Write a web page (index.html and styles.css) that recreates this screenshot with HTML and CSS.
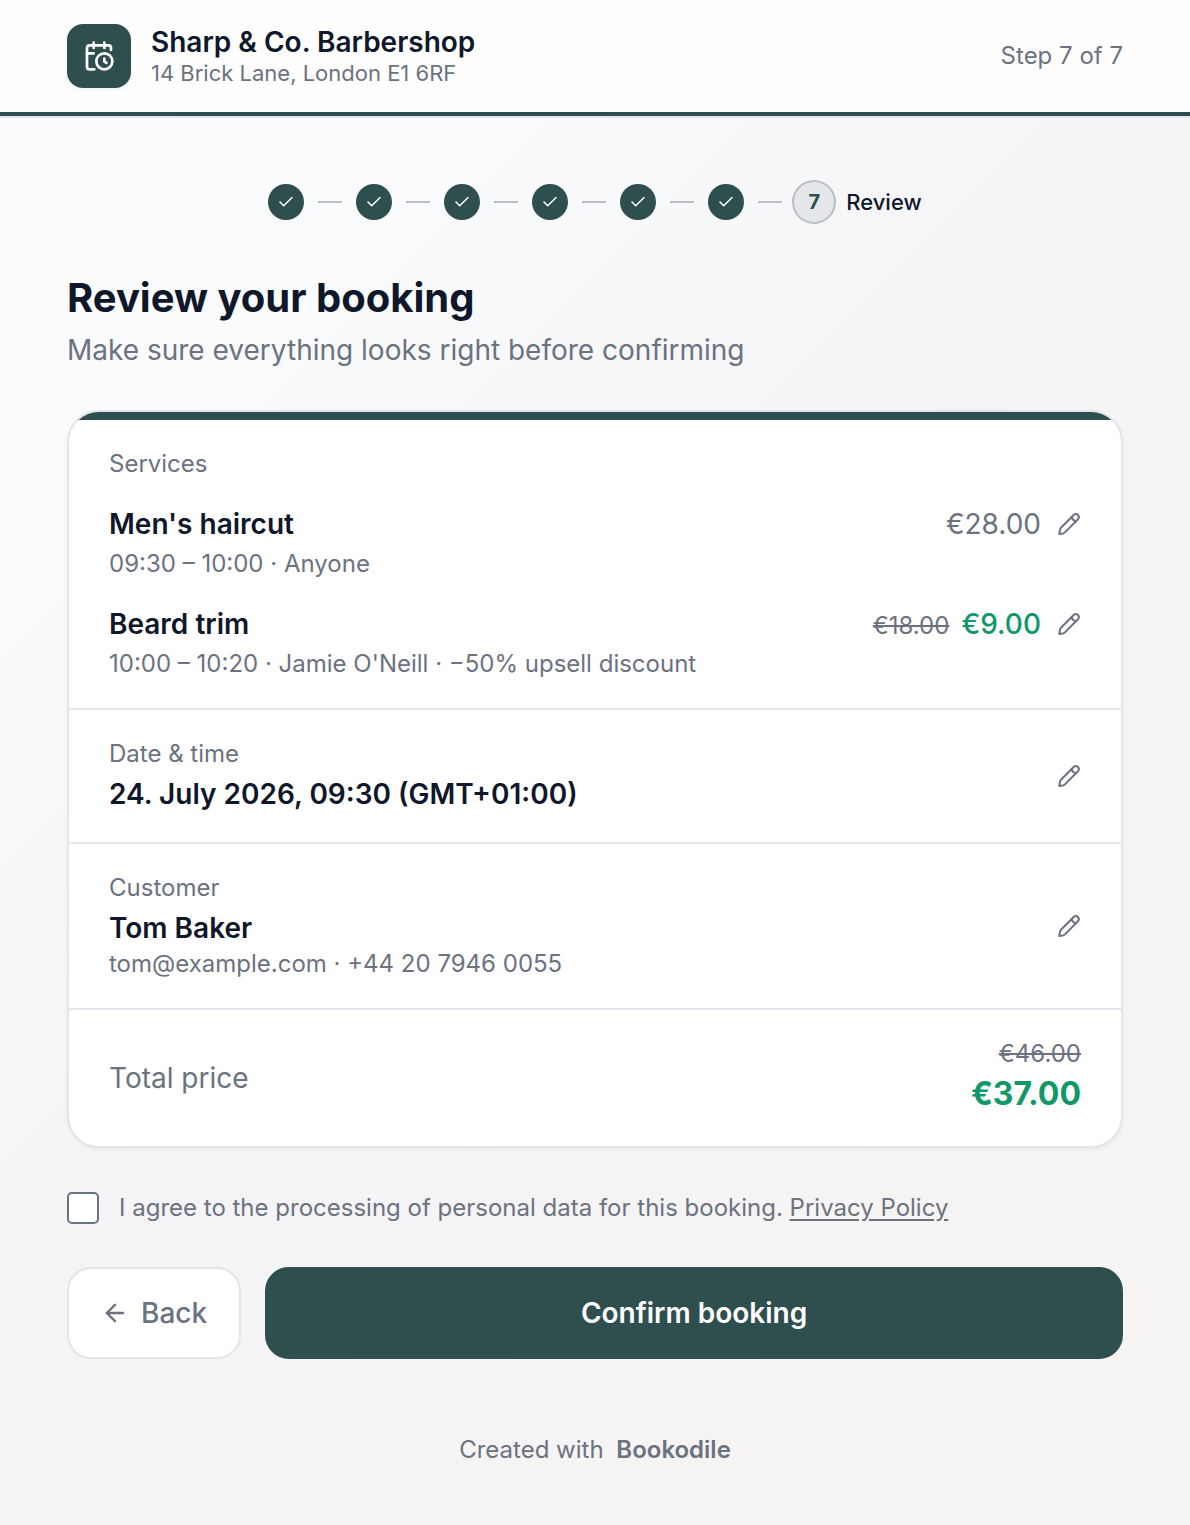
FILE: index.html
```html
<!DOCTYPE html>
<html lang="en">
<head>
  <meta charset="UTF-8" />
  <meta name="viewport" content="width=device-width, initial-scale=1.0"/>
  <title>Review your booking - Sharp &amp; Co. Barbershop</title>
  <link rel="stylesheet" href="styles.css">
</head>
<body>
  <!-- Shared icons -->
  <svg class="icon-defs" aria-hidden="true">
    <symbol id="icon-check" viewBox="0 0 24 24"><path d="M20 6 9 17l-5-5"/></symbol>
    <symbol id="icon-pencil" viewBox="0 0 24 24">
      <path d="M3.9 15.8 15.4 4.2l1.2-1.2c1.3-1.2 3.1-1.2 4.3 0s1.2 3 0 4.3l-1.2 1.2L8.2 20.1c-.7.7-1.5 1.1-2.5 1.3l-3.4.5.5-3.4c.2-1 .5-1.9 1.1-2.7z"/>
      <path d="M14.7 5.2c.4 2.4 1.7 3.7 4.1 4.1"/>
    </symbol>
  </svg>

  <!-- Header -->
  <header class="header">
    <div class="header-inner">
      <div class="logo">
        <svg viewBox="0 0 24 24">
          <path d="M16 14v2.2l1.6 1"/>
          <path d="M16 2v4"/>
          <path d="M21 7.5V6a2 2 0 0 0-2-2H5a2 2 0 0 0-2 2v14a2 2 0 0 0 2 2h3.5"/>
          <path d="M3 10h5"/>
          <path d="M8 2v4"/>
          <circle cx="16" cy="16" r="6"/>
        </svg>
      </div>
      <div class="shop">
        <div class="shop-name">Sharp &amp; Co. Barbershop</div>
        <div class="shop-address">14 Brick Lane, London E1 6RF</div>
      </div>
      <div class="step-count">Step 7 of 7</div>
    </div>
  </header>

  <main class="container">
    <!-- Progress -->
    <ol class="steps">
      <li class="step"><span class="dot"><svg><use href="#icon-check"/></svg></span></li>
      <li class="step"><span class="dot"><svg><use href="#icon-check"/></svg></span></li>
      <li class="step"><span class="dot"><svg><use href="#icon-check"/></svg></span></li>
      <li class="step"><span class="dot"><svg><use href="#icon-check"/></svg></span></li>
      <li class="step"><span class="dot"><svg><use href="#icon-check"/></svg></span></li>
      <li class="step"><span class="dot"><svg><use href="#icon-check"/></svg></span></li>
      <li class="step"><span class="dot current">7</span><span class="step-label">Review</span></li>
    </ol>

    <h1>Review your booking</h1>
    <p class="subtitle">Make sure everything looks right before confirming</p>

    <!-- Summary -->
    <div class="card">
      <section class="section services">
        <div class="label">Services</div>
        <div class="service">
          <div class="row">
            <div class="name">Men's haircut</div>
            <div class="price">€28.00</div>
            <button type="button" class="edit" aria-label="Edit Men's haircut"><svg><use href="#icon-pencil"/></svg></button>
          </div>
          <div class="detail">09:30 – 10:00 · Anyone</div>
        </div>
        <div class="service">
          <div class="row">
            <div class="name">Beard trim</div>
            <div class="prices">
              <s class="old-price">€18.00</s>
              <div class="price discount">€9.00</div>
            </div>
            <button type="button" class="edit" aria-label="Edit Beard trim"><svg><use href="#icon-pencil"/></svg></button>
          </div>
          <div class="detail">10:00 – 10:20 · Jamie O'Neill · −50% upsell discount</div>
        </div>
      </section>

      <section class="section row">
        <div class="info">
          <div class="label">Date &amp; time</div>
          <div class="name">24. July 2026, 09:30 (GMT+01:00)</div>
        </div>
        <button type="button" class="edit" aria-label="Edit date and time"><svg><use href="#icon-pencil"/></svg></button>
      </section>

      <section class="section row">
        <div class="info">
          <div class="label">Customer</div>
          <div class="name">Tom Baker</div>
          <div class="contact">tom@example.com · +44 20 7946 0055</div>
        </div>
        <button type="button" class="edit" aria-label="Edit customer"><svg><use href="#icon-pencil"/></svg></button>
      </section>

      <section class="section row">
        <div class="total-label">Total price</div>
        <div class="total">
          <s class="old-price">€46.00</s>
          <div class="total-price">€37.00</div>
        </div>
      </section>
    </div>

    <form>
      <div class="consent">
        <input type="checkbox" id="consent" name="consent" required>
        <div>
          <label for="consent">I agree to the processing of personal data for this booking.</label>
          <a href="#">Privacy Policy</a>
        </div>
      </div>

      <div class="button-group">
        <button type="button" class="back-button">
          <svg viewBox="0 0 24 24"><path d="m12 19-7-7 7-7"/><path d="M19 12H5"/></svg>
          Back
        </button>
        <button type="submit" class="confirm-button">Confirm booking</button>
      </div>
    </form>
  </main>

  <footer class="footer">
    Created with <a href="#">Bookodile</a>
  </footer>
</body>
</html>
```
FILE: styles.css
```css
* {
  box-sizing: border-box;
}
body {
  margin: 0;
  min-height: 100vh;
  font-family: Inter, sans-serif;
  font-size: 24px;
  line-height: 32px;
  color: #6b7280;
  background: linear-gradient(135deg, #fdfdfe 0%, #f9fafc 25%, #f4f4f7 50%, #f6f4f3 80%, #f6f5f4 100%);
}
svg {
  fill: none;
  stroke: currentColor;
  stroke-width: 2;
  stroke-linecap: round;
  stroke-linejoin: round;
}
button {
  font: inherit;
  cursor: pointer;
}
.icon-defs {
  display: none;
}

/* Header */
.header {
  background-color: #fefefe;
  border-bottom: 4px solid #2f4f4f;
  box-shadow: 0 2px 0 #e4e5ea;
}
.header-inner {
  display: flex;
  align-items: center;
  gap: 20px;
  max-width: 1152px;
  margin: 0 auto;
  padding: 24px 48px;
}
.logo {
  display: flex;
  align-items: center;
  justify-content: center;
  width: 64px;
  height: 64px;
  border-radius: 16px;
  background-color: #2f4f4f;
  color: #fff;
  box-shadow: 0 2px 4px rgba(0,0,0,0.06);
}
.logo svg {
  width: 32px;
  height: 32px;
}
.shop {
  flex: 1;
}
.shop-name {
  font-size: 28px;
  font-weight: 600;
  line-height: 34px;
  color: #0f172a;
}
.shop-address {
  font-size: 22px;
  line-height: 28px;
}

.container {
  max-width: 1152px;
  margin: 0 auto;
  padding: 64px 48px 0;
}

/* Progress */
.steps {
  display: flex;
  justify-content: center;
  margin: 0 0 46px;
  padding: 4px 0;
  list-style: none;
}
.step {
  display: flex;
  align-items: center;
  gap: 14px;
}
.step + .step::before {
  content: "";
  width: 24px;
  height: 2px;
  margin-left: 14px;
  background-color: #bcc1c5;
}
.dot {
  display: flex;
  align-items: center;
  justify-content: center;
  width: 36px;
  height: 36px;
  border-radius: 50%;
  background-color: #2f4f4f;
  color: #fff;
}
.dot svg {
  width: 18px;
  height: 18px;
}
.dot.current {
  background-color: #e4e6e9;
  color: #2f4f4f;
  font-size: 20px;
  font-weight: 700;
  box-shadow: 0 0 0 2px #e4e6e9, 0 0 0 4px #b9c0c3;
}
.step-label {
  font-size: 22px;
  font-weight: 500;
  color: #0f172a;
}

h1 {
  margin: 0;
  font-size: 40px;
  font-weight: 700;
  line-height: 56px;
  color: #0f172a;
}
.subtitle {
  margin: 4px 0 40px;
  font-size: 28px;
  line-height: 40px;
}

/* Summary card */
.card {
  overflow: hidden;
  border: 2px solid #e4e5ea;
  border-radius: 32px;
  background-color: #fff;
  box-shadow: 0 2px 4px rgba(0,0,0,0.05);
}
.card::before {
  content: "";
  display: block;
  height: 8px;
  background-color: #2f4f4f;
}
.section {
  padding: 28px 40px;
}
.section + .section {
  border-top: 2px solid #e4e5ea;
}
.row {
  display: flex;
  align-items: center;
}
.service {
  margin-top: 24px;
}
.name {
  flex: 1;
  font-size: 28px;
  font-weight: 600;
  line-height: 40px;
  color: #0f172a;
}
.info {
  flex: 1;
}
.info .name,
.detail {
  margin-top: 4px;
}
.prices {
  display: flex;
  align-items: baseline;
  gap: 12px;
}
.price {
  font-size: 28px;
  line-height: 40px;
}
.discount {
  font-weight: 500;
  color: #109868;
}
.edit {
  display: flex;
  margin-left: 16px;
  padding: 0;
  border: none;
  background: none;
  color: #6b7280;
}
.edit svg {
  width: 24px;
  height: 24px;
}
.total-label {
  flex: 1;
  font-size: 28px;
  line-height: 40px;
}
.total {
  text-align: right;
}
.total-price {
  font-size: 32px;
  font-weight: 700;
  line-height: 48px;
  color: #109868;
}

/* Consent */
.consent {
  display: flex;
  align-items: center;
  gap: 20px;
  margin: 44px 0 43px;
}
.consent input {
  appearance: none;
  width: 32px;
  height: 32px;
  margin: 0;
  border: 2px solid #6b7280;
  border-radius: 5px;
  background-color: #fff;
}
.consent input:checked {
  background-color: #2f4f4f;
}
.consent a {
  color: inherit;
  text-underline-offset: 3px;
}

/* Buttons */
.button-group {
  display: flex;
  gap: 24px;
}
.button-group button {
  padding: 24px 32px;
  border: 2px solid #e4e5ea;
  border-radius: 24px;
  font-size: 28px;
  line-height: 40px;
}
.back-button {
  display: flex;
  align-items: center;
  gap: 12px;
  background-color: #fff;
  color: #6b7280;
  font-weight: 500;
}
.back-button svg {
  width: 28px;
  height: 28px;
}
.button-group .confirm-button {
  flex: 1;
  border-color: #2f4f4f;
  background-color: #2f4f4f;
  color: #fff;
  font-weight: 600;
}

.footer {
  padding: 75px 48px 60px;
  text-align: center;
}
.footer a {
  margin-left: 6px;
  color: inherit;
  font-weight: 600;
  text-decoration: none;
}
```
